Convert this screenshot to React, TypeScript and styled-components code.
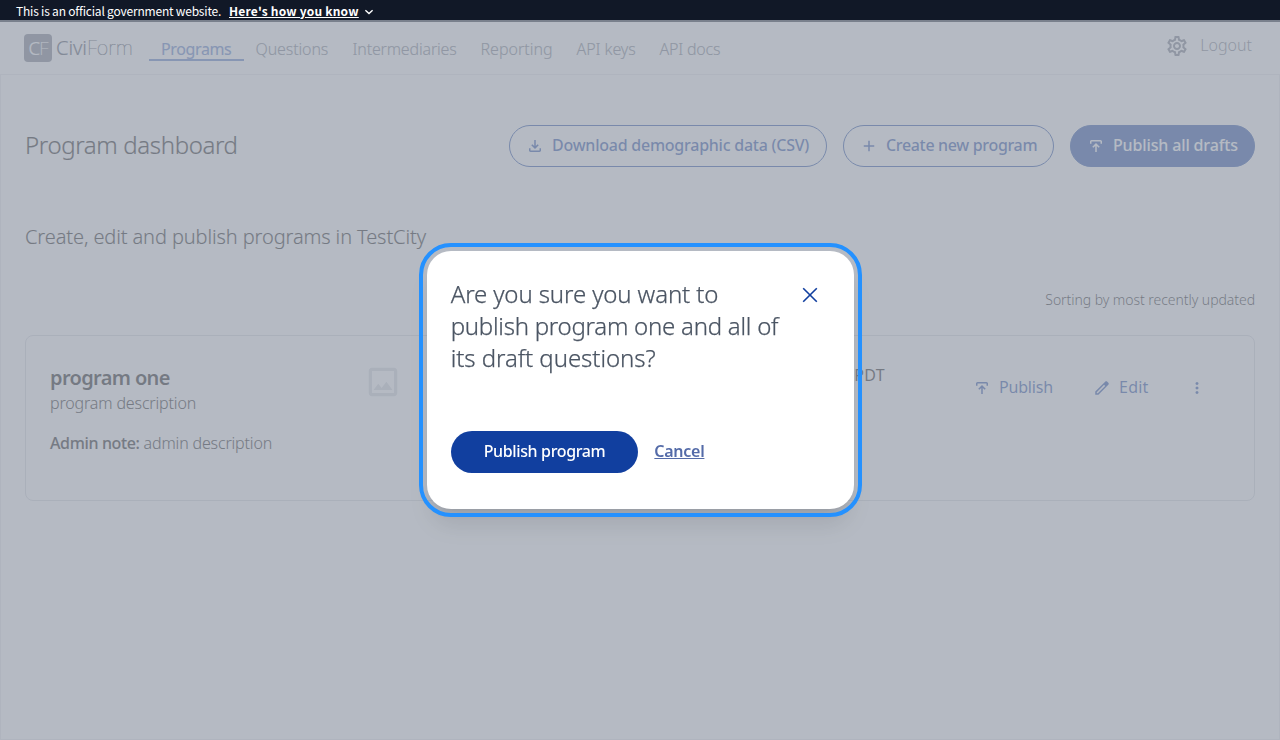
import React from 'react';
import styled, { createGlobalStyle } from 'styled-components';
import { MdOutlineImage, MdOutlineSettings } from 'react-icons/md';

const BLUE = '#113f9f';

const Global = createGlobalStyle`
  *, *::before, *::after { box-sizing: border-box; }
  body { margin: 0; background: #fff; color: #000; overflow: hidden;
    font: 300 16px/24px "Noto Sans", "Open Sans", sans-serif; }
  h1, h2, h3, p { margin: 0; font-weight: 300; }
  button { font: inherit; margin: 0; padding: 0; border: 0; background: none; }
  svg { display: block; flex: none; }
`;

/* ---------- page frame ---------- */

const Page = styled.div`
  display: flex;
  flex-direction: column;
  height: 740px;
`;

const Banner = styled.div`
  display: flex;
  flex: none;
  height: 22px;
  padding-left: 16px;
  background: #111827;
  color: #fff;
  font: 400 12px/22px "Noto Sans CJK SC", sans-serif;
  white-space: nowrap;
`;

const BannerText = styled.span`
  width: 213px;
  letter-spacing: -0.2px;
`;

const BannerLink = styled.span`
  font-weight: 700;
  letter-spacing: 0.2px;
  text-decoration: underline;
  text-decoration-thickness: 1px;
  text-underline-offset: 1px;
  margin-right: 5px;
`;

const Header = styled.header`
  display: flex;
  flex: none;
  height: 53px;
  padding: 0 28px 0 24px;
  border-bottom: 1px solid #e5e7eb;
`;

const Logo = styled.div`
  display: flex;
  align-items: center;
  height: 28px;
  margin-top: 12px;
  width: 125px;
  color: #374151;
  font-size: 20px;
  line-height: 28px;
  letter-spacing: -0.05px;
  -webkit-text-stroke: 0.2px;
`;

const LogoMark = styled.span`
  width: 28px;
  height: 28px;
  margin-right: 4px;
  border-radius: 4px;
  background: #6b7280;
  color: #fff;
  font-size: 18.5px;
  line-height: 27px;
  letter-spacing: -0.9px;
  text-align: center;
`;

const Thin = styled.span`
  font-weight: 100;
`;

const Nav = styled.nav`
  display: flex;
  margin-top: 15px;
`;

const NavItem = styled.a<{ $width: number; $track?: number; $active?: boolean }>`
  width: ${(p) => p.$width}px;
  height: 24px;
  padding-left: 12px;
  white-space: nowrap;
  letter-spacing: ${(p) => p.$track ?? 0}px;
  color: ${(p) => (p.$active ? '#486fc0' : '#6b7280')};
  font-weight: ${(p) => (p.$active ? 400 : 300)};
  -webkit-text-stroke: 0.15px;
  border-bottom: 2px solid ${(p) => (p.$active ? '#486fc0' : 'transparent')};
`;

const Account = styled.div`
  display: flex;
  align-items: center;
  gap: 11px;
  height: 24px;
  margin: 12px 0 0 auto;
  color: #6b7280;
  span { padding-bottom: 2px; }
`;

const Main = styled.main`
  flex: 1;
  padding: 50px 24px 0;
  border: 1px solid #e5e7eb;
  border-top: 0;
`;

/* ---------- dashboard ---------- */

const TitleRow = styled.div`
  display: flex;
  align-items: center;
  gap: 16px;
  height: 42px;
`;

const Title = styled.h1`
  margin-right: auto;
  padding-bottom: 2px;
  font-size: 24px;
  line-height: 32px;
  letter-spacing: -0.36px;
  -webkit-text-stroke: 0.2px;
`;

const Label = styled.span<{ $track?: number }>`
  letter-spacing: ${(p) => p.$track ?? 0}px;
  white-space: nowrap;
`;

const PillButton = styled.button<{ $width: number; $solid?: boolean }>`
  display: flex;
  align-items: center;
  gap: 8px;
  width: ${(p) => p.$width}px;
  height: 42px;
  padding: 0 0 2px 16px;
  border: 1px solid ${BLUE};
  border-radius: 21px;
  background: ${(p) => (p.$solid ? BLUE : 'transparent')};
  color: ${(p) => (p.$solid ? '#fff' : BLUE)};
  font-weight: 500;
  svg { position: relative; top: 1px; }
`;

const Subtitle = styled.h2`
  margin-top: 56px;
  font-size: 20px;
  line-height: 28px;
  letter-spacing: -0.11px;
  -webkit-text-stroke: 0.15px;
`;

const SortNote = styled.p`
  margin-top: 39px;
  font-size: 14px;
  line-height: 20px;
  letter-spacing: -0.05px;
  text-align: right;
`;

const Card = styled.section`
  display: flex;
  height: 166px;
  margin-top: 25px;
  padding: 27px 48px 0 24px;
  border: 1px solid #d1d5db;
  border-radius: 8px;
`;

const Info = styled.div`
  width: 314px;
`;

const ProgramName = styled.h3`
  padding-top: 1px;
  font-size: 20px;
  line-height: 27px;
  font-weight: 600;
  letter-spacing: -0.64px;
`;

const Line = styled.p<{ $gap?: number; $track: number }>`
  margin-top: ${(p) => p.$gap ?? 0}px;
  letter-spacing: ${(p) => p.$track}px;
  -webkit-text-stroke: 0.1px;
  b { font-weight: 500; letter-spacing: -0.36px; }
`;

const Thumb = styled.div`
  width: 37px;
  height: 37px;
  color: #d1d5db;
`;

const Edited = styled.p`
  margin: 0 0 0 auto;
  font-weight: 400;
  letter-spacing: 0.3px;
`;

const Actions = styled.div`
  display: flex;
  align-items: center;
  height: 24px;
  margin: 12px 0 0 88px;
  color: ${BLUE};
  font-weight: 400;
`;

const Action = styled.button<{ $width: number }>`
  display: flex;
  align-items: center;
  gap: 8px;
  width: ${(p) => p.$width}px;
  color: inherit;
  svg { position: relative; top: 1px; }
`;

/* ---------- dialog ---------- */

const Backdrop = styled.div`
  position: fixed;
  inset: 20px 0 0;
  background: rgba(156, 163, 175, 0.75);
`;

const Dialog = styled.div`
  position: fixed;
  left: 426.67px;
  top: 251px;
  width: 427.2px;
  height: 258px;
  padding: 27px 32px 0 24px;
  border-radius: 24px;
  background: #fff;
  outline: 4px solid #2491ff;
  outline-offset: 4px;
  box-shadow: 0 20px 25px -5px rgba(0, 0, 0, 0.1), 0 8px 10px -6px rgba(0, 0, 0, 0.1);
`;

const DialogHead = styled.div`
  display: flex;
  justify-content: space-between;
  color: #4b5563;
`;

const DialogTitle = styled.h2`
  font-size: 24px;
  line-height: 32px;
  white-space: nowrap;
  -webkit-text-stroke: 0.25px;
`;

const TitleLine = styled.span<{ $track: number }>`
  display: block;
  letter-spacing: ${(p) => p.$track}px;
`;

const Close = styled.button`
  height: 24px;
  margin-top: 5px;
  color: ${BLUE};
`;

const DialogActions = styled.div`
  display: flex;
  align-items: center;
  gap: 16px;
  margin-top: 57px;
  font-weight: 500;
`;

const Confirm = styled.button`
  width: 187.7px;
  height: 42px;
  padding-bottom: 2px;
  border-radius: 21px;
  background: ${BLUE};
  color: #fff;
  letter-spacing: -0.36px;
`;

const Cancel = styled.button`
  padding-bottom: 2px;
  color: #546ba8;
  font-weight: 600;
  letter-spacing: -0.27px;
  text-decoration: underline;
  text-decoration-thickness: 1px;
  text-underline-offset: 1px;
`;

/* ---------- icons ---------- */

const icons = {
  download:
    'M480-320 280-520l56-58 104 104v-326h80v326l104-104 56 58-200 200ZM240-160q-33 0-56.5-23.5T160-240v-120h80v120h480v-120h80v120q0 33-23.5 56.5T720-160H240Z',
  publish:
    'M440-160v-326L336-382l-56-58 200-200 200 200-56 58-104-104v326h-80ZM160-600v-120q0-33 23.5-56.5T240-800h480q33 0 56.5 23.5T800-720v120h-80v-120H240v120h-80Z',
  add: 'M440-440H200v-80h240v-240h80v240h240v80H520v240h-80v-240Z',
  edit: 'M200-200h57l391-391-57-57-391 391v57Zm-80 80v-170l528-527q12-11 26.5-17t30.5-6q16 0 31 6t26 18l55 56q12 11 17.5 26t5.5 30q0 16-5.5 30.5T817-647L290-120H120Z',
  more: 'M480-160q-33 0-56.5-23.5T400-240q0-33 23.5-56.5T480-320q33 0 56.5 23.5T560-240q0 33-23.5 56.5T480-160Zm0-240q-33 0-56.5-23.5T400-480q0-33 23.5-56.5T480-560q33 0 56.5 23.5T560-480q0 33-23.5 56.5T480-400Zm0-240q-33 0-56.5-23.5T400-720q0-33 23.5-56.5T480-800q33 0 56.5 23.5T560-720q0 33-23.5 56.5T480-640Z',
};

function Icon({ name }: { name: keyof typeof icons }) {
  return (
    <svg width="18" height="18" viewBox="0 -960 960 960" fill="currentColor">
      <path d={icons[name]} />
    </svg>
  );
}

const nav = [
  { text: 'Programs', width: 94.5, track: -0.38, active: true },
  { text: 'Questions', width: 97, track: -0.12 },
  { text: 'Intermediaries', width: 128, track: -0.17 },
  { text: 'Reporting', width: 96, track: 0 },
  { text: 'API keys', width: 83, track: -0.06 },
  { text: 'API docs', width: 85, track: -0.2 },
];

export default function App() {
  return (
    <>
      <Global />
      <Page>
        <Banner>
          <BannerText>This is an official government website.</BannerText>
          <BannerLink>Here's how you know</BannerLink>
          <svg width="10" height="22" viewBox="0 0 10 22" fill="none" stroke="#fff" strokeWidth="1.4">
            <path d="M1.4 10.3 5 13.6 8.6 10.3" />
          </svg>
        </Banner>
        <Header>
          <Logo>
            <LogoMark>C<Thin>F</Thin></LogoMark>
            Civi<Thin>Form</Thin>
          </Logo>
          <Nav>
            {nav.map((n) => (
              <NavItem key={n.text} $width={n.width} $track={n.track} $active={n.active}>
                {n.text}
              </NavItem>
            ))}
          </Nav>
          <Account>
            <MdOutlineSettings size={24} />
            <Label>Logout</Label>
          </Account>
        </Header>
        <Main>
          <TitleRow>
            <Title>Program dashboard</Title>
            <PillButton $width={318}>
              <Icon name="download" />
              <Label $track={-0.24}>Download demographic data (CSV)</Label>
            </PillButton>
            <PillButton $width={211}>
              <Icon name="add" />
              <Label $track={-0.33}>Create new program</Label>
            </PillButton>
            <PillButton $width={185} $solid>
              <Icon name="publish" />
              <Label $track={-0.14}>Publish all drafts</Label>
            </PillButton>
          </TitleRow>
          <Subtitle>Create, edit and publish programs in TestCity</Subtitle>
          <SortNote>Sorting by most recently updated</SortNote>
          <Card>
            <Info>
              <ProgramName>program one</ProgramName>
              <Line $track={-0.15}>program description</Line>
              <Line $gap={16} $track={-0.16}>
                <b>Admin note:</b> admin description
              </Line>
            </Info>
            <Thumb>
              <MdOutlineImage size={38} />
            </Thumb>
            <Edited>PDT</Edited>
            <Actions>
              <Action $width={120}>
                <Icon name="publish" />
                <Label $track={-0.2}>Publish</Label>
              </Action>
              <Action $width={95}>
                <Icon name="edit" />
                <Label $track={0.25}>Edit</Label>
              </Action>
              <Action $width={18}>
                <Icon name="more" />
              </Action>
            </Actions>
          </Card>
        </Main>
      </Page>
      <Backdrop />
      <Dialog>
        <DialogHead>
          <DialogTitle>
            <TitleLine $track={-0.12}>Are you sure you want to</TitleLine>
            <TitleLine $track={-0.25}>publish program one and all of</TitleLine>
            <TitleLine $track={-0.06}>its draft questions?</TitleLine>
          </DialogTitle>
          <Close aria-label="Close">
            <svg width="24" height="24" viewBox="0 0 24 24" fill="none" stroke="currentColor" strokeWidth="1.6">
              <path d="M5.2 5.2 18.8 18.8M18.8 5.2 5.2 18.8" />
            </svg>
          </Close>
        </DialogHead>
        <DialogActions>
          <Confirm>Publish program</Confirm>
          <Cancel>Cancel</Cancel>
        </DialogActions>
      </Dialog>
    </>
  );
}
